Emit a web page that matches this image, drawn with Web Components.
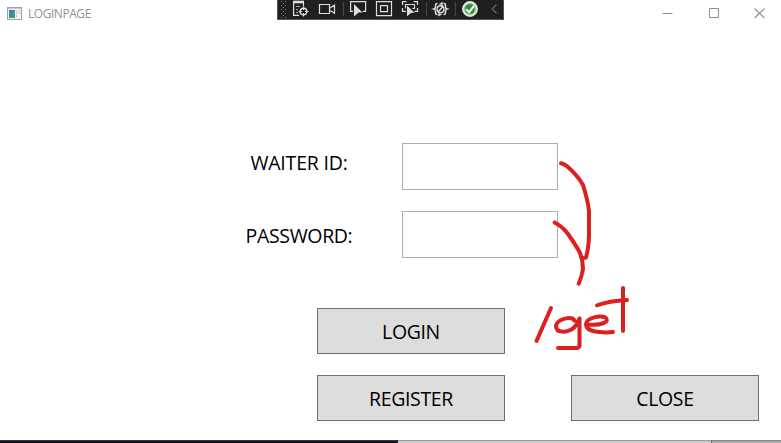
<!DOCTYPE html>
<html lang="en"><head><meta charset="utf-8"><title>LOGINPAGE</title>
<style>html,body{margin:0;width:781px;height:443px;overflow:hidden;background:#fff}</style></head>
<body><login-window></login-window>
<script>
const define=(name,html)=>customElements.define(name,class extends HTMLElement{
  constructor(){super();const t=document.createElement('template');t.innerHTML=html;
    this.attachShadow({mode:'open'}).append(t.content.cloneNode(true));}
});
define('title-bar',`<style>
:host{display:flex;align-items:center;height:26px;box-sizing:border-box;padding:0 16px 0 7px;color:#929292;font:12px/16px "Open Sans","Noto Sans",sans-serif}
.name{margin-left:6px;flex:1;letter-spacing:-.45px;padding-top:1px}
.controls{display:flex;gap:35px}svg{display:block}
</style>
<svg width="15" height="13" viewBox="0 0 15 13"><defs><linearGradient id="g" x2="1" y2="1"><stop stop-color="#3b7ab0"/><stop offset="1" stop-color="#48a184"/></linearGradient></defs><rect x=".5" y=".5" width="14" height="12" fill="#f1f3f5" stroke="#9ba1a6"/><path d="M1 1.500h13" stroke="#c5cbd0"/><rect x="2" y="3" width="6" height="8" fill="url(#g)"/><path d="M9.500 3v8" stroke="#c8d3dc"/><rect x="11" y="3" width="2.500" height="4" fill="#d8dde1"/></svg>
<span class="name"><slot></slot></span>
<span class="controls" role="group">
<svg width="11" height="11"><path d="M.5 5.500h10" stroke="#8c8c8c"/></svg>
<svg width="11" height="11"><path d="M1.500.5h9v9h-9z" fill="none" stroke="#8c8c8c"/></svg>
<svg width="11" height="11"><path d="M.5.5l10 9.500M10.500.5l-10 9.500" stroke="#8c8c8c" stroke-width="1.100"/></svg>
</span>`);
define('debug-toolbar',`<style>
:host{display:block;width:227px;height:20px;background:#1f1f20;box-sizing:border-box;border:solid #555;border-width:0 1px 1px}
svg{display:block}
</style>
<svg width="225" height="19" viewBox="278 0 225 19" fill="none" stroke="#dedede" stroke-width="1.200">
<defs><pattern id="dots" x="281" y="1" width="4" height="4" patternUnits="userSpaceOnUse"><path d="M0 0h1v1h-1zM2 2h1v1h-1z" fill="#777" stroke="none"/></pattern></defs>
<rect x="281" y="1" width="6" height="17" fill="url(#dots)" stroke="none"/>
<path d="M293.600 3v12.400h5.500M303.500 3v3"/><path d="M293 2h11" stroke-width="2.600"/><path d="M296 6.500h4M296 9.500h2M296 12.500h2" stroke="#aaa"/>
<circle cx="303.500" cy="11.500" r="3.300" stroke-width="1.400"/><path d="M303.500 6.500v3.500M303.500 13v3.500M298.500 11.500h3.500M305 11.500h3.500"/>
<path d="M319.500 4.500h10v9h-10zM330 8l4.500-2.800v8L330 10.500"/>
<path d="M343.500 2v14M426.500 2v14M455.500 2v14" stroke="#454545"/>
<path d="M353 11.400h-2.400V1.600h15v9.800h-3"/><path d="M354 4l8.500 8.500-4 .1-1 1-3.500 2.800z" fill="#dedede" stroke="none"/>
<path d="M376.500 1.600h15v14h-15zM380.500 5.600h7v6h-7z"/>
<path d="M402.500 5V1.600h4M413.500 1.600h4V5M417.500 8v3.400h-3M406 11.400h-3.500V8M405.500 8.500v-4h9v4h-2"/><path d="M407 5.500l7.500 7.300-3.600.1-1 1-2.900 2.300z" fill="#dedede" stroke="none"/>
<path d="M437.500 3.600h-.5q-1.500 0-1.500 2v1.500q0 1.500-1.500 1.900 1.500.4 1.500 1.900v1.500q0 2 1.500 2h.5M443.500 3.600h.5q1.500 0 1.500 2v1.500q0 1.500 1.500 1.900-1.500.4-1.500 1.900v1.500q0 2-1.500 2h-.5" stroke-width="1.500"/><circle cx="440.500" cy="9.200" r="3.400" stroke-width="1.400"/><path d="M438 12l5-5.500M439.500 4.500l2.500-1.500v3M441.500 13.800l-2.500 1.500v-3" stroke-width="1.400"/>
<circle cx="470" cy="9" r="7.300" fill="#e7f3e7" stroke="#d9ecd9" stroke-width="1.300"/><circle cx="470" cy="9" r="6.100" fill="#318f3b"/><circle cx="470" cy="9" r="5.300" stroke="#8ccb8f" stroke-width=".7"/><path d="M466.200 9.200l3 3 4.800-6.300" stroke="#fff" stroke-width="2"/>
<path d="M496.500 4.700L492 9l4.500 4.300" stroke="#666" stroke-width="1.200"/>
</svg>`);
define('field-row',`<style>
:host{display:grid;grid-template-columns:130px 156px;column-gap:38px;height:47px}
label{text-align:center;padding-top:var(--label-drop,6px);font:19.500px/27px "Open Sans","Noto Sans",sans-serif;letter-spacing:var(--track,-.3px);color:#000}
input{box-sizing:border-box;width:156px;height:47px;border:1px solid #abadb3;border-radius:0;background:#fff;margin:0;padding:4px}
</style><label for="f"><slot></slot></label><input id="f">`);
define('push-button',`<style>
:host{display:block;width:188px;height:46px}
button{display:block;width:100%;height:100%;border:1px solid #707070;background:#ddd;color:#000;border-radius:0;margin:0;padding:1px 0 0;font:19.500px/27px "Open Sans","Noto Sans",sans-serif;letter-spacing:-.35px}
</style><button><slot></slot></button>`);
define('ink-note',`<style>:host{display:block;width:110px;height:205px;pointer-events:none}svg{display:block}</style>
<svg width="110" height="205" viewBox="530 155 110 205" fill="none" stroke="#dc2020" stroke-width="4" stroke-linecap="round" stroke-linejoin="round">
<path d="M561 163.300Q564 163.800 568 167Q578 176 583 185Q588 201 589 211V236Q588.500 249 586 257.500L583.500 258"/>
<path d="M554.700 222.500Q563 227 568 234Q575 244 579 251Q583 259 583 269Q582 276 578.700 283.700"/>
<path d="M551 308L536.500 341"/>
<path d="M574.500 320.500L572.500 318.500C567 317 556 320 556 326.500C556.500 333 566 332.500 571.500 329.500Q577 326 579.500 318.500V346Q578.500 348.500 574 348H558"/>
<path d="M588 324.500Q597 325.500 604 323Q609 320.500 605.500 317.500C600 315 587 317.500 586 324C586 330 593 331.500 599 332Q606 332.800 613 332"/>
<path d="M597 305.300Q609 301 627 300"/><path d="M623 288V331"/>
</svg>`);
define('task-edge',`<style>:host{display:grid;grid-template-columns:398px 313px 1fr;height:3px}
i{border-top:1px solid #9b9b9b;background:#cbcbcb}.dark{background:#14131d;border-color:#383741}.end{background:#aaa;border-color:#888;border-left:1px solid #666}</style><i class="dark"></i><i></i><i class="end"></i>`);
define('login-window',`<style>
:host{display:flex;flex-direction:column;width:781px;height:443px;background:#fff;position:relative}
main{flex:1;display:flex;flex-direction:column}
.fields{display:grid;gap:21px;margin:117px 0 0 234px}
.waiter{--label-drop:6px;--track:-.2px}
.password{--label-drop:11px;--track:-.35px}
.actions{display:grid;grid-template-columns:188px 188px;column-gap:66px;row-gap:21px;margin:50px 0 0 317px}
.login{grid-column:1/3}
debug-toolbar{position:absolute;left:277px;top:0}
ink-note{position:absolute;left:530px;top:155px}
</style>
<title-bar>LOGINPAGE</title-bar>
<main><div class="fields"><field-row class="waiter">WAITER ID:</field-row><field-row class="password">PASSWORD:</field-row></div>
<div class="actions"><push-button class="login">LOGIN</push-button><push-button>REGISTER</push-button><push-button>CLOSE</push-button></div></main>
<task-edge></task-edge><debug-toolbar></debug-toolbar><ink-note></ink-note>`);
</script></body></html>
